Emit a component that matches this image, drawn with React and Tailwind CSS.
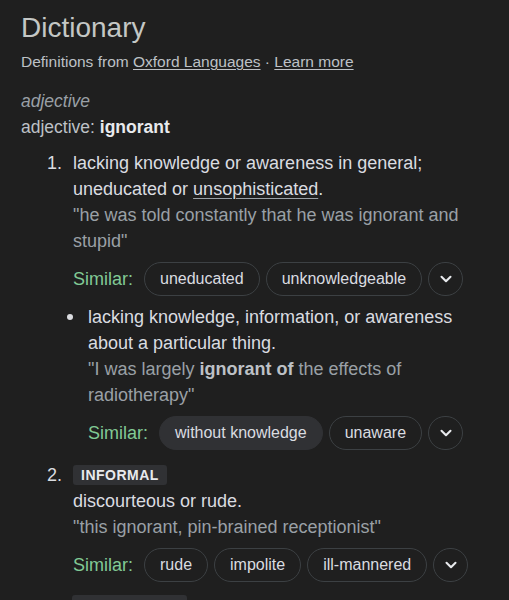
import React from 'react';
import { ChevronDown } from 'lucide-react';

const Chip = ({ children, filled }) => (
  <span
    className={
      'h-[34px] px-[15px] flex items-center rounded-full text-[16px] text-[#dadce0] border ' +
      (filled ? 'bg-[#303134] border-[#303134]' : 'border-[#3c4043]')
    }
  >
    {children}
  </span>
);

const Similar = ({ words, filled }) => (
  <div className="flex items-center mt-[8px]">
    <span className="text-[18px] text-[#81c995] mr-[11px]">Similar:</span>
    <div className="flex gap-[6px]">
      {words.map((w, i) => (
        <Chip key={w} filled={filled && i === 0}>{w}</Chip>
      ))}
      <span className="w-[35px] h-[34px] rounded-full border border-[#3c4043] flex items-center justify-center">
        <ChevronDown size={18} strokeWidth={2.75} color="#e8eaed" />
      </span>
    </div>
  </div>
);

const Badge = ({ children }) => (
  <div className="h-[26px] flex items-center">
    <span className="h-[20px] px-[8px] flex items-center rounded-[3px] bg-[#303134] text-[14px] font-bold tracking-[0.5px] text-[#e8eaed]">
      {children}
    </span>
  </div>
);

export default function App() {
  return (
    <div
      className="min-h-[600px] bg-[#1f1f1f] pl-[21px] pr-[16px] pt-[12px] pb-8 text-[#bdc1c6]"
      style={{ fontFamily: '"Liberation Sans", Arial, sans-serif' }}
    >
      <h1 className="text-[28px] leading-[32px] text-[#c4c7c5]">Dictionary</h1>
      <div className="mt-[8px] text-[15.5px] leading-[20px] text-[#bdc1c6]">
        Definitions from{' '}
        <a className="underline underline-offset-2 decoration-1">Oxford Languages</a>
        {' · '}
        <a className="underline underline-offset-2 decoration-1">Learn more</a>
      </div>

      <div className="mt-[16px] text-[17.5px] leading-[26px] italic text-[#9aa0a6]">adjective</div>
      <div className="text-[17.5px] leading-[26px] text-[#bdc1c6]">
        adjective: <b className="text-[#e8eaed]">ignorant</b>
      </div>

      <div className="mt-[10px] text-[18px] leading-[26px]">
        <div className="flex pl-[26px]">
          <span className="w-[26px] shrink-0 text-[#dadce0]">1.</span>
          <div className="flex-1">
            <div className="text-[#dadce0]">
              lacking knowledge or awareness in general; uneducated or{' '}
              <span className="underline underline-offset-[3px] decoration-1 decoration-[#9aa0a6]">unsophisticated</span>.
            </div>
            <div className="text-[#9aa0a6]">"he was told constantly that he was ignorant and stupid"</div>
            <Similar words={['uneducated', 'unknowledgeable']} />
          </div>
        </div>

        <div className="flex pl-[46px] mt-[8px]">
          <span className="w-[21px] shrink-0 flex pt-[10px]">
            <span className="w-[6px] h-[6px] rounded-full bg-[#dadce0]" />
          </span>
          <div className="flex-1">
            <div className="text-[#dadce0]">lacking knowledge, information, or awareness about a particular thing.</div>
            <div className="text-[#9aa0a6]">
              "I was largely <b className="text-[#bdc1c6]">ignorant of</b> the effects of radiotherapy"
            </div>
            <Similar words={['without knowledge', 'unaware']} filled />
          </div>
        </div>

        <div className="flex pl-[26px] mt-[12px]">
          <span className="w-[26px] shrink-0 text-[#dadce0]">2.</span>
          <div className="flex-1">
            <Badge>INFORMAL</Badge>
            <div className="text-[#dadce0]">discourteous or rude.</div>
            <div className="text-[#9aa0a6]">"this ignorant, pin-brained receptionist"</div>
            <Similar words={['rude', 'impolite', 'ill-mannered']} />
          </div>
        </div>

        <div className="pl-[51px] mt-[13px]">
          <div className="w-[115px] h-[20px] rounded-[3px] bg-[#303134]" />
        </div>
      </div>
    </div>
  );
}
